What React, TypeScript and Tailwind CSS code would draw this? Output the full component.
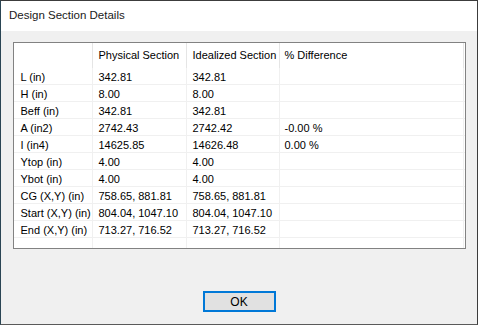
const rows = [
  ['L (in)', '342.81', '342.81', ''],
  ['H (in)', '8.00', '8.00', ''],
  ['Beff (in)', '342.81', '342.81', ''],
  ['A (in2)', '2742.43', '2742.42', '-0.00 %'],
  ['I (in4)', '14625.85', '14626.48', '0.00 %'],
  ['Ytop (in)', '4.00', '4.00', ''],
  ['Ybot (in)', '4.00', '4.00', ''],
  ['CG (X,Y) (in)', '758.65, 881.81', '758.65, 881.81', ''],
  ['Start (X,Y) (in)', '804.04, 1047.10', '804.04, 1047.10', ''],
  ['End (X,Y) (in)', '713.27, 716.52', '713.27, 716.52', ''],
];

const cols = ['w-[79px] pl-[7px]', 'w-[94px] pl-[6px]', 'w-[93px] pl-[6px]', 'w-[184px] pl-[5px]'];

export default function App() {
  return (
    <div
      className="w-[478px] h-[325px] flex flex-col border border-[#3c3c3c] border-l-[#2a4554] border-b-[#5a5a5a] bg-[#f0f0f0] text-black"
      style={{ fontFamily: '"Liberation Sans", Arial, sans-serif' }}
    >
      {/* title bar */}
      <div className="h-[30px] bg-white flex items-center pl-[8px] text-[11.5px] text-[#1a1a1a]">
        Design Section Details
      </div>

      <div className="flex-1 flex flex-col items-center">
        <div className="mt-[11px] w-[453px] h-[207px] border border-[#828282] bg-white overflow-hidden text-[11px]">
          <div className="flex h-[25px]">
            {['', 'Physical Section', 'Idealized Section', '% Difference'].map((h, i) => (
              <div key={i} className={`${cols[i]} h-full flex items-center border-r border-[#e5e5e5]`}>
                {h}
              </div>
            ))}
          </div>
          {rows.map((r, ri) => (
            <div key={ri} className="flex h-[17px] border-b border-[#f0f0f0]">
              {r.map((c, ci) => (
                <div key={ci} className={`${cols[ci]} h-full flex items-center pt-[2px] border-r border-[#f0f0f0] whitespace-nowrap`}>
                  {c}
                </div>
              ))}
            </div>
          ))}
          <div className="flex h-[10px]">
            {cols.map((c, i) => (
              <div key={i} className={`${c} h-full border-r border-[#f0f0f0]`} />
            ))}
          </div>
        </div>

        <button className="mt-[42px] w-[73px] h-[21px] border-2 border-[#0078d7] bg-[#e1e1e1] text-[12px] flex items-center justify-center">
          OK
        </button>
      </div>
    </div>
  );
}
